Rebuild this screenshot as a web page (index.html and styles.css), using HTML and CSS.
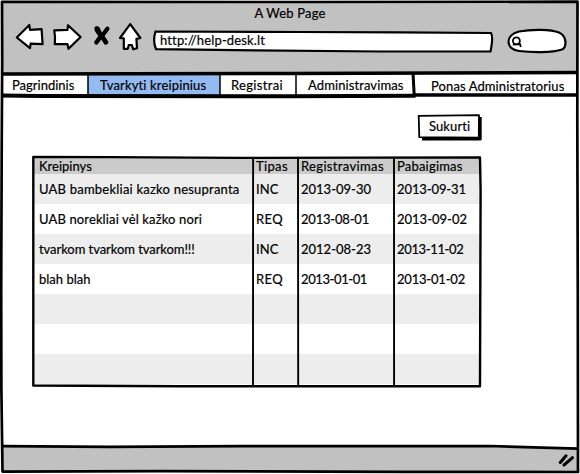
FILE: index.html
```html
<!DOCTYPE html>
<html lang="lt">
<head>
<meta charset="utf-8">
<title>A Web Page</title>
<link rel="stylesheet" href="styles.css">
</head>
<body>
<div class="window">
  <header class="chrome">
    <div class="title"><span class="t-title">A Web Page</span></div>
    <div class="toolbar">
      <svg class="icons" width="130" height="32" viewBox="14 21 130 32">
        <g fill="#fff" stroke="#000" stroke-width="2.2" stroke-linejoin="round">
          <path d="M16.8 37.5 L29.3 25 L30 29.8 L41.6 29.2 L42.6 44.2 L30.6 43.6 L30 48.2 Z"/>
          <path d="M80.6 37 L68 25.2 L67.5 29.8 L54.3 30.3 L55 37 L54.8 44.2 L67.5 44.2 L68.5 48.8 Z"/>
          <path d="M130.2 24.2 L120 38 L123.8 38.3 L123.8 48.8 L127.8 48.8 L128.8 45 L131.8 45 L133.3 49.3 L137 48.3 L136.4 38.8 L140.4 38 Z"/>
        </g>
        <path d="M94.3 27.5 Q97 24.5 99.5 27.5 L102 32.5 L106 27 Q109.5 25.5 109.5 29.5 L104.5 36 L108.5 42 Q108 45.5 104.5 44.5 L101.3 39.5 L97.5 44.5 Q94.5 45.5 94 42 L98.3 36 L94.8 31 Z" fill="#000"/>
      </svg>
      <div class="address">
        <svg class="outline" width="341" height="24" viewBox="153 30 341 24"><path d="M155.5 31.5 L300 32 L400 32.3 L491 33 Q493.5 37 490.5 51.5 L380 51.5 L255 50.3 L156 49.2 Q152.5 41 155.5 31.5 Z"/></svg>
        <span class="t-url">http://help-desk.lt</span>
      </div>
      <div class="search">
        <svg class="outline" width="60" height="26" viewBox="507 28 60 26"><path d="M519 31.5 C532 29 551 29.3 559 32.5 C567 36 567 47 562 49.5 C552 53 531 52.5 519 51 C505 49 505 35 519 31.5 Z"/><g class="glass"><circle cx="516.4" cy="40.8" r="3.5"/><path d="M512.8 44.6 L520 44.2 L520.8 47"/></g></svg>
      </div>
    </div>
  </header>
  <nav class="tabs">
    <a class="tab tab-1"><span class="t-pag">Pagrindinis</span></a>
    <a class="tab tab-2"><span class="t-tva">Tvarkyti kreipinius</span></a>
    <a class="tab tab-3"><span class="t-reg">Registrai</span></a>
    <a class="tab tab-4"><span class="t-adm">Administravimas</span></a>
    <a class="tab user"><span class="t-pon">Ponas Administratorius</span></a>
  </nav>
  <main class="content">
    <button class="create"><span class="t-suk">Sukurti</span></button>
    <div class="grid">
      <div class="row head"><span class="cell"><span class="h1">Kreipinys</span></span><span class="cell"><span class="h2">Tipas</span></span><span class="cell"><span class="h3">Registravimas</span></span><span class="cell"><span class="h4">Pabaigimas</span></span></div>
      <div class="row odd"><span class="cell"><span class="r1">UAB bambekliai kazko nesupranta</span></span><span class="cell"><span class="inc">INC</span></span><span class="cell"><span class="d1">2013-09-30</span></span><span class="cell"><span class="e1">2013-09-31</span></span></div>
      <div class="row"><span class="cell"><span class="r2">UAB norekliai vėl kažko nori</span></span><span class="cell"><span class="req">REQ</span></span><span class="cell"><span class="d2">2013-08-01</span></span><span class="cell"><span class="e2">2013-09-02</span></span></div>
      <div class="row odd"><span class="cell"><span class="r3">tvarkom tvarkom tvarkom!!!</span></span><span class="cell"><span class="inc">INC</span></span><span class="cell"><span class="d3">2012-08-23</span></span><span class="cell"><span class="e3">2013-11-02</span></span></div>
      <div class="row"><span class="cell"><span class="r4">blah blah</span></span><span class="cell"><span class="req">REQ</span></span><span class="cell"><span class="d4">2013-01-01</span></span><span class="cell"><span class="e4">2013-01-02</span></span></div>
      <div class="row odd"></div>
      <div class="row"></div>
      <div class="row odd"></div>
    </div>
  </main>
  <footer class="status">
    <svg width="18" height="14" viewBox="557 454 18 14"><path d="M560.3 463.5 L566 456.8 M564 466 L572.5 458.7" fill="none" stroke="#000" stroke-width="3" stroke-linecap="round"/></svg>
  </footer>
  <!-- Hand-drawn rules laid over the panels -->
  <svg class="lines" width="580" height="474" viewBox="0 0 580 474">
    <g stroke-width="2.7">
      <path d="M2 1.9 L300 2 L577.5 1.7 L577.3 120 L577.8 300 L578 472 L400 471.8 L160 471.2 L2.5 471.6 L1.4 390 L1.2 290 L1.7 150 L2.2 60 Z"/>
      <path d="M2.5 446.2 L110 446.9 L240 446.2 L490 446 L577.5 448.6"/>
    </g>
    <path stroke-width="3.5" d="M2 74 L290 73.5 L577 72.6"/>
    <path stroke-width="4" d="M2 95.4 L40 96 L290 96.3 L415.5 95.8"/>
    <path stroke-width="3.5" d="M414 95 L577 95"/>
    <path stroke-width="3" d="M413 73 L414.3 97"/>
    <path stroke-width="1.5" d="M88 74 V96 M220 74 V96 M296 74 V96"/>
    <g stroke-width="2.4">
      <path d="M33.3 156.9 L110 157.1 L240 157.9 L480 157.4 L480.6 190 L480 386.2 L300 386.2 L180 386.3 L33.3 385.5 Z"/>
    </g>
    <path stroke-width="1.9" d="M253.1 158 L253 386 M298 158 L298.2 386 M394 158 L394.1 386"/>
    <g class="button-edge">
      <path stroke-width="1.8" d="M418.7 115.8 L479 115.2 L478.8 137.6 L419.3 137.2 Z"/>
      <path stroke-width="3" d="M480.2 117 L480.2 139 L422 139"/>
    </g>
  </svg>
</div>
</body>
</html>
```
FILE: styles.css
```css
* { box-sizing: border-box; }
body { margin: 0; background: #fff; color: #000; font: 13px/16px Lato, sans-serif; -webkit-text-stroke: 0.2px #000; }
svg { display: block; flex: none; }
.window { position: relative; width: 580px; height: 474px; padding: 2px 2px 3px; display: flex; flex-direction: column; overflow: hidden; }
.chrome { height: 71px; background: #c1c1c1; }
.title { text-align: center; padding-top: 3px; }
.toolbar { display: flex; }
.icons { margin-left: 12px; }
.address { position: relative; width: 341px; height: 24px; margin: 9px 0 0 9px; padding: 2px 0 0 7px; }
.address .outline { position: absolute; left: 0; top: 0; }
.address span { position: relative; }
.search { margin: 7px 0 0 13px; }
.outline path { fill: #fff; stroke: #000; stroke-width: 2.2; }
.outline .glass circle, .outline .glass path { fill: none; stroke: #000; stroke-width: 1.8; }
.tabs { display: flex; height: 23px; }
.tab { line-height: 25px; white-space: nowrap; }
.tab-1 { width: 86px; padding-left: 10px; }
.tab-2 { width: 132px; padding-left: 12px; background: #94baf2; }
.tab-3 { width: 76px; padding-left: 11px; }
.tab-4 { width: 118px; padding-left: 12px; }
.user { width: 162px; padding-left: 17px; line-height: 27px; }
.content { flex: 1; display: flex; flex-direction: column; padding: 19px 97px 0 31px; }
.create { align-self: flex-end; width: 61px; height: 23px; padding: 0 0 0 9px; border: 0; background: #fff; color: #000; font: inherit; line-height: 23px; text-align: left; }
.grid { margin-top: 19px; width: 447px; }
.row { display: grid; grid-template-columns: 220px 45px 96px 86px; height: 30px; line-height: 30px; }
.odd { background: #ededed; }
.head { height: 17px; line-height: 19px; background: #cbcbcb; }
.cell { padding-left: 3px; white-space: nowrap; }
.cell:first-child { padding-left: 6px; }
.status { height: 24px; background: #c1c1c1; display: flex; justify-content: flex-end; padding: 6px 3px 0 0; }
.lines { position: absolute; left: 0; top: 0; pointer-events: none; fill: none; stroke: #000; stroke-linejoin: round; }

.t-title { letter-spacing: 0.17px; }
.t-url { letter-spacing: 0.14px; }
.t-pag { letter-spacing: 0; }
.t-tva { letter-spacing: 0.15px; }
.t-reg { letter-spacing: 0.33px; }
.t-adm, .t-pon, .t-suk, .inc { letter-spacing: 0.1px; }
.h2, .req { letter-spacing: 0.35px; }
.h3 { letter-spacing: 0.35px; }
.h4 { letter-spacing: 0.2px; }
.r1 { letter-spacing: 0.22px; }
.r2 { letter-spacing: 0.13px; }
.r3 { letter-spacing: -0.06px; }
.r4 { letter-spacing: 0; }
.d2 { letter-spacing: -0.2px; }
.d4 { letter-spacing: -0.4px; }
.e1 { letter-spacing: -0.1px; }
.e3 { letter-spacing: -0.35px; }
.e4 { letter-spacing: -0.2px; }
```
